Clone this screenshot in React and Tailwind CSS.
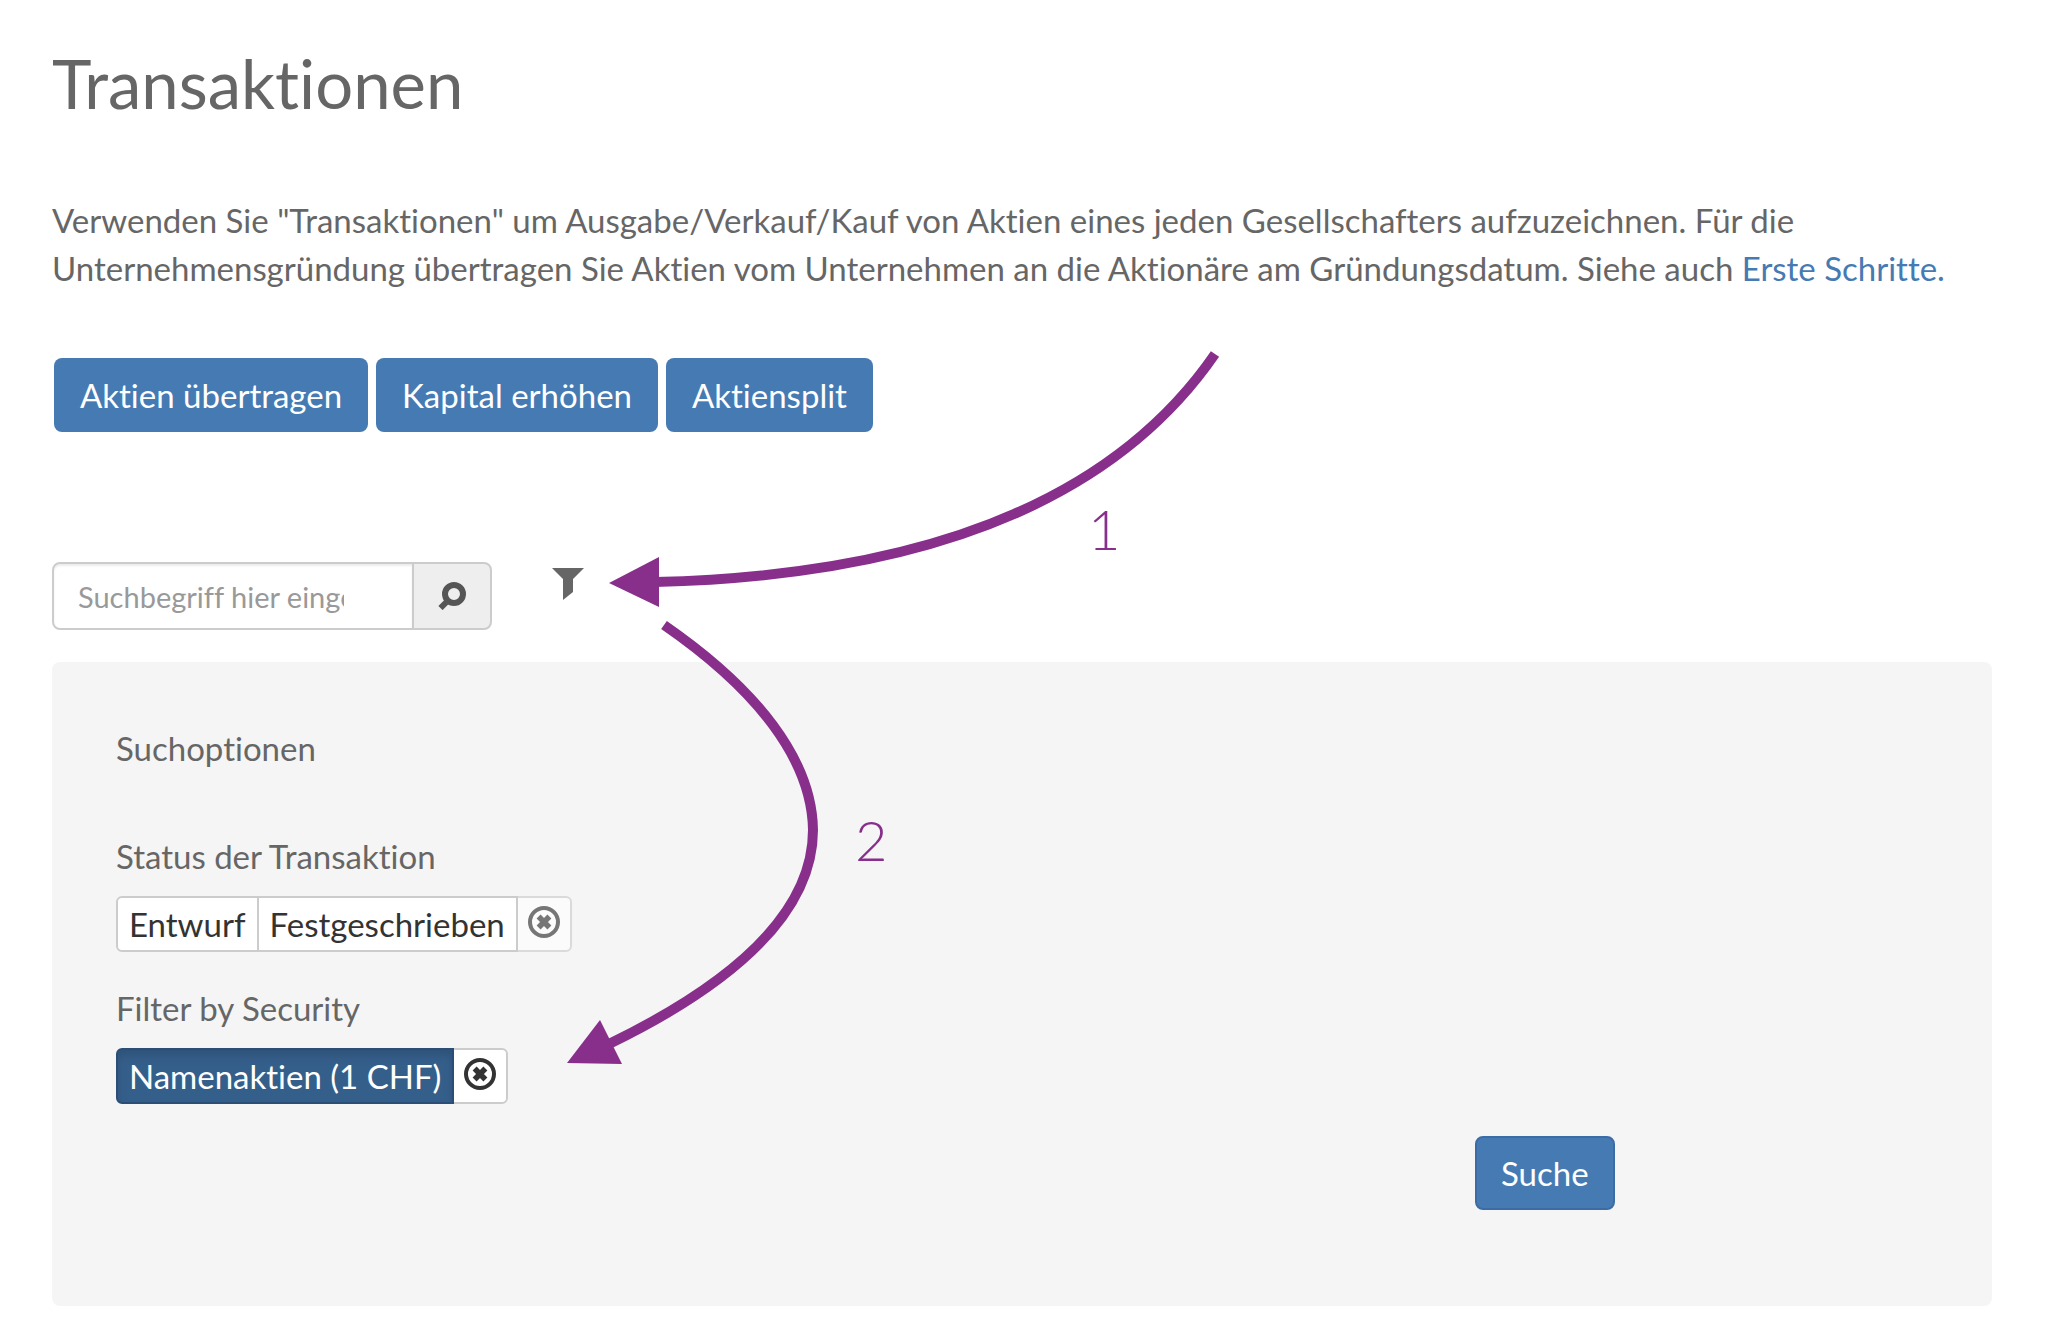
import { useState } from 'react'
import clsx from 'clsx'

const ACTIONS = ['Aktien übertragen', 'Kapital erhöhen', 'Aktiensplit']

const SearchIcon = () => (
  <svg viewBox="0 0 28 28" className="w-7 h-7" aria-hidden="true">
    <circle cx="16" cy="12" r="9" fill="none" stroke="#555" strokeWidth="6" />
    <path d="M10 18.5L2.5 26" stroke="#555" strokeWidth="6" />
  </svg>
)

const FilterIcon = () => (
  <svg viewBox="0 0 32 32" className="w-8 h-8" aria-hidden="true">
    <path d="M0 0H32L21 11V24L11 32V11Z" fill="#666" />
  </svg>
)

const ClearIcon = () => (
  <svg viewBox="0 0 32 32" className="w-8 h-8" aria-hidden="true">
    <circle cx="16" cy="16" r="14" fill="none" stroke="currentColor" strokeWidth="4" />
    <path d="M10.6 10.6L21.4 21.4M21.4 10.6L10.6 21.4" stroke="currentColor" strokeWidth="5.6" />
  </svg>
)

/**
 * Row of joined toggle buttons with a clear button at the end
 */
const FilterGroup = ({ label, options, selected, onSelect }) => (
  <div role="group" aria-label={label} className="flex mt-4 h-14">
    {options.map((option) => (
      <button
        key={option}
        type="button"
        aria-pressed={selected === option}
        onClick={() => onSelect(option)}
        className={clsx(
          'px-[11px] border-2 -mr-0.5 first:rounded-l-md',
          selected === option
            ? 'relative bg-[#355f8b] border-[#2a4e76] text-white shadow-[inset_0_6px_10px_rgba(0,0,0,0.125)]'
            : 'bg-white border-[#ccc] text-[#333]'
        )}
      >
        {option}
      </button>
    ))}
    <button
      type="button"
      aria-label={`${label} zurücksetzen`}
      disabled={!selected}
      onClick={() => onSelect(null)}
      className="flex items-start pt-2 w-14 justify-center border-2 border-[#ccc] rounded-r-md bg-white text-[#333] disabled:opacity-65"
    >
      <ClearIcon />
    </button>
  </div>
)

/**
 * Numbered walkthrough arrows drawn over the page
 */
const Walkthrough = () => (
  <svg
    viewBox="0 0 1300 1100"
    className="absolute top-0 left-0 w-[1300px] h-[1100px] pointer-events-none font-[Lato,sans-serif] font-light"
    fill="#882f8c"
  >
    <g fill="none" stroke="#882f8c" strokeWidth="10">
      <path d="M1215 354Q1065 572 655 582" />
      <path d="M664 625C758 690 812 760 813 830C813 905 747 977 609 1044" />
    </g>
    <path d="M609 583L659 557V607Z" />
    <path d="M567 1063L600 1020L622 1064Z" />
    <text x="1088" y="550" fontSize="56">1</text>
    <text x="855" y="861" fontSize="56">2</text>
  </svg>
)

const App = () => {
  const [query, setQuery] = useState('')
  const [showOptions, setShowOptions] = useState(true)
  const [status, setStatus] = useState(null)
  const [security, setSecurity] = useState('Namenaktien (1 CHF)')

  return (
    <div className="relative min-h-screen bg-white pt-12 pb-10 pl-[52px] pr-[72px] font-[Lato,sans-serif] text-[33px] leading-12 text-[#666] [font-variant-ligatures:none]">
      <h1 className="text-[67px] leading-[70px]">Transaktionen</h1>

      <p className="mt-[78px]">
        Verwenden Sie "Transaktionen" um Ausgabe/Verkauf/Kauf von Aktien eines jeden Gesellschafters aufzuzeichnen. Für die
        Unternehmensgründung übertragen Sie Aktien vom Unternehmen an die Aktionäre am Gründungsdatum. Siehe auch{' '}
        <a href="#erste-schritte" className="text-[#467ab3]">Erste Schritte.</a>
      </p>

      <div className="flex gap-2 mt-[66px] pl-0.5">
        {ACTIONS.map((action) => (
          <button key={action} type="button" className="h-[74px] px-[26px] rounded-lg bg-[#467ab3] text-white">
            {action}
          </button>
        ))}
      </div>

      <div className="flex items-start mt-[130px]">
        <input
          type="text"
          aria-label="Suchbegriff"
          value={query}
          onChange={(e) => setQuery(e.target.value)}
          placeholder="Suchbegriff hier eingeben"
          className="w-[362px] h-[68px] pl-6 pr-[68px] text-[29px] border-2 border-[#ccc] rounded-l-lg shadow-[inset_0_2px_2px_rgba(0,0,0,0.075)] placeholder:text-[#999]"
        />
        <button
          type="button"
          aria-label="Suchen"
          className="flex items-center justify-center w-20 h-[68px] -ml-0.5 border-2 border-[#ccc] rounded-r-lg bg-[#eee]"
        >
          <SearchIcon />
        </button>
        <button
          type="button"
          aria-label="Suchoptionen anzeigen"
          onClick={() => setShowOptions(!showOptions)}
          className="ml-[60px] mt-1.5"
        >
          <FilterIcon />
        </button>
      </div>

      {showOptions && (
        <section className="mt-8 px-16 pt-[62px] pb-24 rounded-lg bg-[#f5f5f5]">
          <h2>Suchoptionen</h2>

          <div className="mt-[60px]">
            <div>Status der Transaktion</div>
            <FilterGroup
              label="Status der Transaktion"
              options={['Entwurf', 'Festgeschrieben']}
              selected={status}
              onSelect={setStatus}
            />
          </div>

          <div className="mt-8">
            <div>Filter by Security</div>
            <FilterGroup
              label="Filter by Security"
              options={['Namenaktien (1 CHF)']}
              selected={security}
              onSelect={setSecurity}
            />
          </div>

          <div className="grid grid-cols-4 mt-8">
            <button
              type="button"
              className="col-start-4 justify-self-start h-[74px] px-6 border-2 border-[#3c6ca5] rounded-lg bg-[#467ab3] text-white"
            >
              Suche
            </button>
          </div>
        </section>
      )}

      <Walkthrough />
    </div>
  )
}

export default App
